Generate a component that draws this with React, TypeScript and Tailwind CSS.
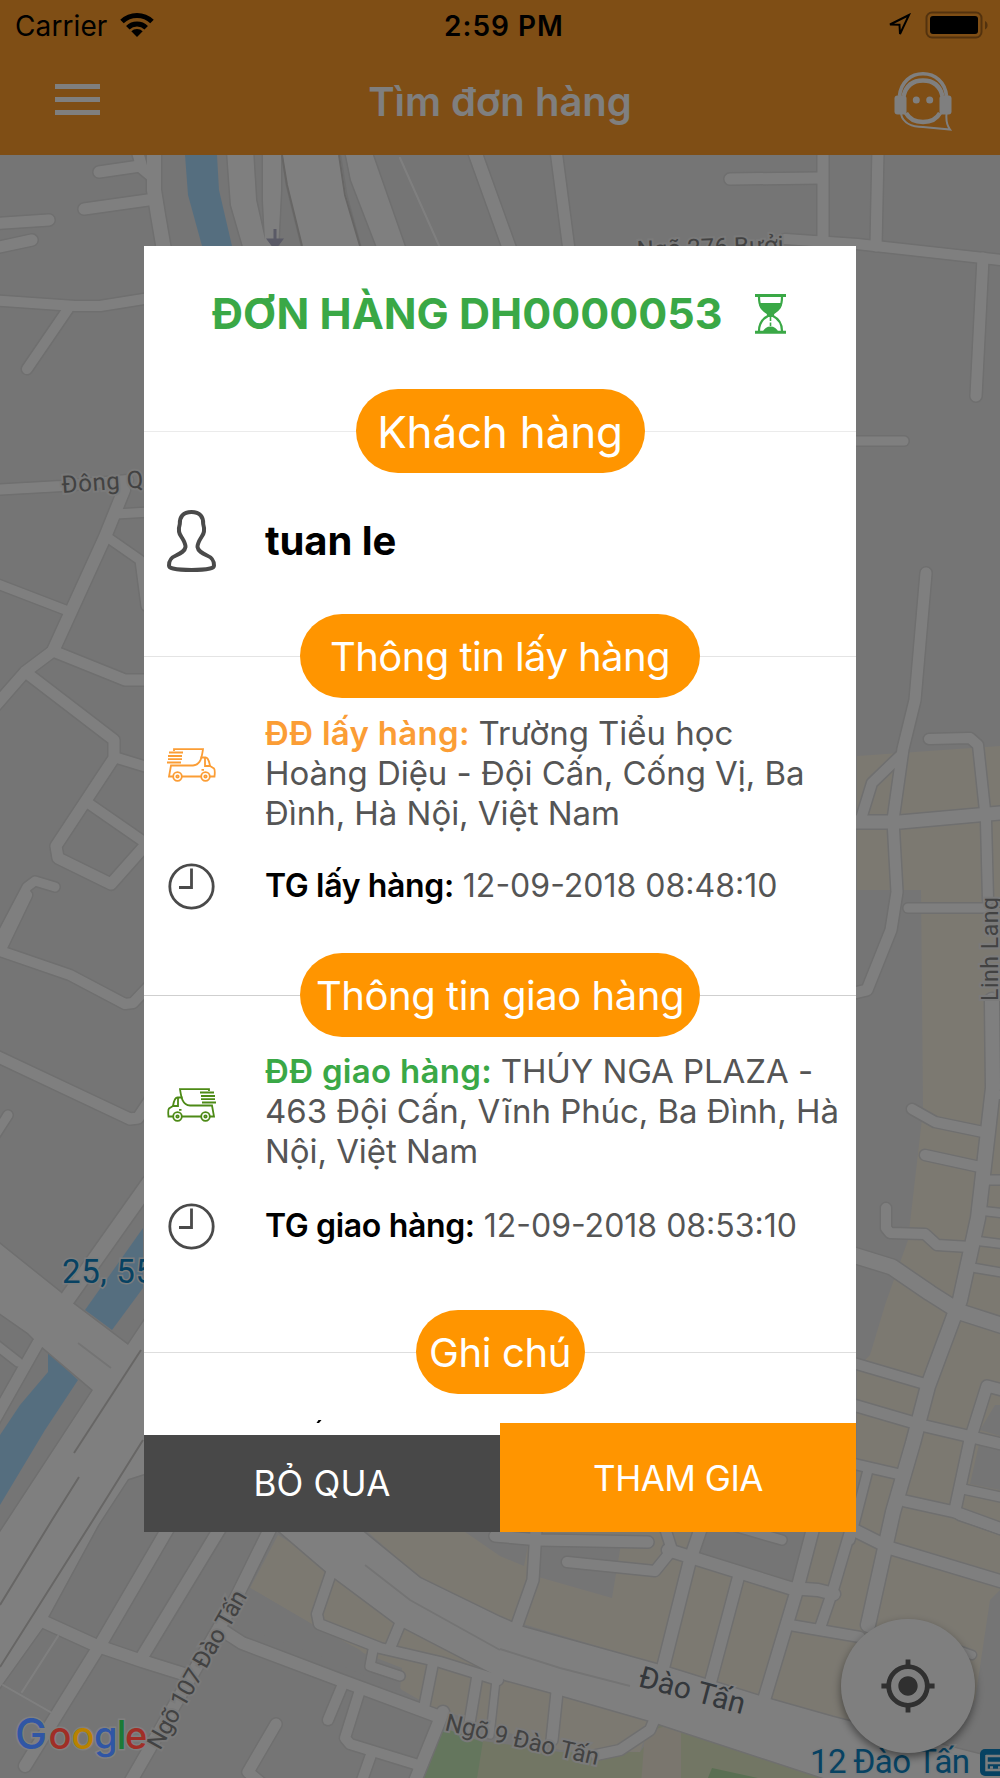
import type { ReactNode } from 'react'
import { MdMyLocation } from 'react-icons/md'

const ORDER = {
  code: 'DH0000053',
  customer: 'tuan le',
  pickup: {
    address: 'Trường Tiểu học Hoàng Diệu - Đội Cấn, Cống Vị, Ba Đình, Hà Nội, Việt Nam',
    time: '12-09-2018 08:48:10',
  },
  delivery: {
    address: 'THÚY NGA PLAZA - 463 Đội Cấn, Vĩnh Phúc, Ba Đình, Hà Nội, Việt Nam',
    time: '12-09-2018 08:53:10',
  },
}

// [path, stroke width]
const ROADS: [string, number][] = [
  // north west
  ['M137 150L142 168L154 178', 11],
  ['M154 150V190L158 215L164 250', 14],
  ['M99 172L140 166', 11],
  ['M84 209L155 199', 11],
  ['M-10 224L49 220', 11],
  ['M-10 249L32 240', 11],
  ['M474 150L510 250', 13],
  ['M556 150L569 250', 11],
  ['M-10 300L75 306H100L150 298', 10],
  ['M68 309L27 369', 10],
  ['M-10 490L62 486L128 480', 10],
  ['M124 490L105 537L53 651', 12],
  ['M116 514L150 512', 9],
  ['M107 537L140 560L146 606', 9],
  ['M-10 581L68 611', 9],
  ['M-10 712L25 672L53 651', 11],
  ['M53 651L125 680H150', 11],
  ['M28 674L114 740V758L56 846L58 858L111 884L150 840', 11],
  ['M114 757L150 768', 10],
  ['M88 803L150 846', 10],
  ['M55 887L35 881L27 887L-6 950', 9],
  ['M27 895L3 945L0 951L70 975L125 1004L133 1003L150 985', 10],
  ['M-10 1053L130 1119L138 1118L150 1100', 11],
  ['M-8 1140L8 1115', 9],
  // north east
  ['M823 150V240', 11],
  ['M730 179L820 178', 11],
  ['M878 150L876 246', 11],
  ['M785 239L857 244L1010 261', 10],
  ['M983 258L976 396', 11],
  ['M850 441H904', 9],
  ['M926 573L915 700L903 749L893 820L897 892L891 930L867 990L850 994', 11],
  ['M900 756L872 783L860 822', 10],
  ['M850 822H900L1010 812', 13],
  ['M929 739L970 738L978 745L986 820L988 900', 10],
  ['M908 908H985', 9],
  // east blocks
  ['M992 1000L993 1088L978 1218L960 1300L928 1386L913 1443L893 1512L868 1625', 14],
  ['M912 1109L935 1122L988 1133', 10],
  ['M925 1155L980 1167', 10],
  ['M886 1208V1228L890 1233L925 1234L937 1245L970 1247', 10],
  ['M850 1254L892 1267L930 1293L960 1312L1010 1328', 15],
  ['M850 1362L925 1384', 10],
  ['M850 1404L925 1426L1010 1446', 11],
  ['M850 1463L902 1475', 10],
  ['M868 1470L850 1540', 9],
  ['M905 1501L955 1512L1010 1532', 11],
  ['M1010 1392L987 1386L970 1440L955 1510', 11],
  ['M963 1489L1010 1499', 9],
  ['M985 1180H1010', 9],
  ['M983 1211L1010 1214', 8],
  ['M978 1241L1010 1245', 8],
  ['M975 1268L1010 1274', 8],
  ['M994 1095H1010', 8],
  // south west
  ['M150 1182L65 1302', 15],
  ['M-10 1428L38 1343', 11],
  ['M-10 1340L18 1362', 9],
  ['M40 1620L95 1645L142 1661L190 1676', 12],
  ['M170 1525L100 1645L25 1766', 12],
  ['M222 1525L142 1657', 12],
  ['M272 1525L235 1600L128 1786', 12],
  ['M225 1632L242 1643L340 1680L440 1717', 12],
  ['M276 1724L248 1772L262 1784', 11],
  ['M343 1684L328 1720', 10],
  ['M360 1690L345 1738L350 1744L415 1764', 10],
  ['M372 1752L360 1786', 10],
  ['M443 1712L413 1786', 12],
  // south centre
  ['M332 1570L317 1614L319 1624L380 1648L440 1662L498 1680', 10],
  ['M400 1624L390 1648', 10],
  ['M373 1650L370 1666L400 1676', 9],
  ['M433 1663L424 1708', 10],
  ['M477 1678L468 1732', 10],
  ['M496 1680L490 1735', 7],
  ['M557 1692L552 1740', 11],
  ['M656 1716L650 1730L620 1750L596 1755', 10],
  ['M536 1530L533 1580L516 1628', 11],
  ['M495 1536L540 1540L648 1542', 11],
  ['M567 1562L655 1571L672 1550L664 1525', 10],
  ['M668 1550L790 1588L818 1590L834 1594', 12],
  ['M702 1525L690 1560L662 1672', 12],
  ['M739 1575L710 1684', 11],
  ['M814 1525L797 1590L764 1700', 12],
  ['M852 1525L833 1590L820 1628', 10],
  ['M790 1625L860 1637', 10],
  ['M850 1528L890 1548L1010 1584', 12],
  ['M960 1515L1010 1532', 10],
  ['M730 1525L782 1540', 9],
  ['M958 1650L972 1655', 8],
]

const AREA_ROADS = [
  'M227 150H253L256 200L265 240L263 200V150H281V190L278 250H244L231 205Z',
  'M282 150L287 185L303 250H361L346 195L339 150Z',
  'M345 150H371L406 250H378L351 180Z',
  'M-5 1240L60 1292L71 1302L128 1345L150 1312V1472L128 1479L98 1525L48 1617L43 1627L3 1683L-5 1694V1540L93 1390L40 1345L28 1333L-5 1310Z',
  'M272 1525L328 1573L395 1623L505 1680L553 1693L647 1720L845 1785H1010V1762L833 1717L773 1700L667 1667L523 1627L500 1617L420 1578L355 1525Z',
]

const SAND = [
  'M857 756L1000 746V1590L990 1600L975 1700L940 1745L833 1717L667 1667L500 1617L420 1578L360 1525H857V1368L870 1355L885 1305L908 1240L923 1110L921 890H857Z',
  'M278 1535L500 1672L650 1722L640 1752L560 1750L430 1706L400 1690L402 1668L330 1640L310 1623L250 1588Z',
]

const RAIL_LINES = [
  'M282 155L287 185L302 246',
  'M339 155L345 195L360 246',
  'M141 1350L74 1453',
  'M79 1477L52 1520L0 1605',
  'M143 1440L93 1520L0 1667',
]

function MapCanvas() {
  return (
    <svg
      viewBox="0 155 1000 1623"
      className="block h-full w-full font-['Roboto',sans-serif]"
      fill="none"
    >
      <rect y="155" width="1000" height="1623" fill="#eaeaea" />
      {SAND.map(d => (
        <path key={d} d={d} fill="#f8f2e3" />
      ))}
      {/* grey courtyards inside the built-up blocks */}
      <path
        d="M455 1525H532L524 1566L500 1556ZM538 1538H622L612 1598L535 1576ZM702 1525H812L796 1582L700 1553ZM980 1440L1000 1444V1490L970 1484ZM995 1405H1000V1436L980 1430ZM310 1623L250 1588L235 1625L330 1660L430 1706L402 1690L360 1650Z"
        fill="#eaeaea"
      />
      <path d="M185 155H217L219 190L232 246H202L188 195Z" fill="#abdcff" />
      <path d="M143 1228V1288L112 1330L85 1310Z" fill="#abdcff" />
      <path d="M48 1352L78 1380L45 1430L0 1505V1435L20 1405L48 1372Z" fill="#abdcff" />
      <path d="M418 1785L444 1728L485 1743L476 1785Z" fill="#c9ecbb" />
      <path d="M476 1785L483 1741L560 1752L640 1752L660 1724L760 1755L845 1785Z" fill="#e4ecc9" />
      <path d="M645 1732L681 1722V1785H641Z" fill="#f4eddc" />
      <path d="M712 1768L790 1785H705Z" fill="#b5dfa6" />

      <g stroke="#dedede" strokeLinejoin="round" strokeLinecap="round">
        {AREA_ROADS.map(d => (
          <path key={d} d={d} strokeWidth={3} />
        ))}
        {ROADS.map(([d, w]) => (
          <path key={d} d={d} strokeWidth={w + 3} />
        ))}
      </g>
      <g stroke="#ffffff" strokeLinejoin="round" strokeLinecap="round">
        {AREA_ROADS.map(d => (
          <path key={d} d={d} fill="#ffffff" strokeWidth={0} />
        ))}
        {ROADS.map(([d, w]) => (
          <path key={d} d={d} strokeWidth={w} />
        ))}
        <path d="M400 158L441 250M58 1636L22 1692M3 1685L52 1713" strokeWidth={2} />
      </g>
      {RAIL_LINES.map(d => (
        <path key={d} d={d} stroke="#cfcdcb" strokeWidth={2} />
      ))}
      <path
        d="M78 1343L111 1368M365 1565L410 1600L500 1650M500 1649L560 1668L630 1686"
        stroke="#e9e9e9"
        strokeWidth={2}
      />
      <path d="M275 229V242M269 240H281L275 248Z" stroke="#b4b4cc" strokeWidth={3} fill="#b4b4cc" />

      <g fill="#848484" stroke="#f4f4f4" strokeWidth={4} paintOrder="stroke" fontSize={24}>
        <text transform="translate(637 258) rotate(-2)" textLength={147}>Ngõ 276 Bưởi</text>
        <text transform="translate(62 493) rotate(-4)" textLength={82}>Đông Q</text>
        <text transform="translate(998 1001) rotate(-90)" textLength={104} fontSize={23}>Linh Lang</text>
        <text transform="translate(160 1751) rotate(-60.5)" textLength={178}>Ngõ 107 Đào Tấn</text>
        <text transform="translate(444 1730) rotate(13)" textLength={157}>Ngõ 9 Đào Tấn</text>
      </g>
      <g fill="#697078" stroke="#ffffff" strokeWidth={3} paintOrder="stroke" fontSize={30}>
        <text transform="translate(637 1686) rotate(15)" textLength={109}>Đào Tấn</text>
      </g>
      <g fill="#0e84c4" stroke="#f6fafc" strokeWidth={3} paintOrder="stroke">
        <text x="62" y="1283" fontSize={33} textLength={92}>25, 55</text>
        <text x="810" y="1773" fontSize={33} textLength={160}>12 Đào Tấn</text>
      </g>
      {/* bus stop */}
      <rect x="980" y="1749" width="27" height="27" rx="5" fill="#0e84c4" />
      <path d="M986 1756H1000M986.500 1755V1770H1000M986 1763H1000" stroke="#f6fafc" strokeWidth={2.5} />
      <path d="M990 1767.500H993M998 1767.500H1000" stroke="#f6fafc" strokeWidth={2.5} />
    </svg>
  )
}

function StatusBar() {
  return (
    <div className="grid h-[49px] grid-cols-3 items-center pl-[15px] pr-[11px] pt-[2px] text-[28px] leading-none text-black">
      <div className="flex items-center gap-[12px]">
        <span className="tracking-[0.1px]">Carrier</span>
        <svg width="36" height="26" viewBox="0 0 36 26" fill="none" stroke="#000" strokeWidth="5" className="-mt-[2px]">
          <path d="M3 9.5A21.5 21.5 0 0 1 33 9.5" />
          <path d="M8.8 15.8A13.2 13.2 0 0 1 27.2 15.8" />
          <path d="M18 25L12.3 19.3A8 8 0 0 1 23.7 19.3Z" fill="#000" stroke="none" />
        </svg>
      </div>
      <div className="pl-[4px] text-center font-semibold tracking-[1px]">2:59 PM</div>
      <div className="flex items-center justify-end gap-[14px] pb-px">
        <svg width="24" height="24" viewBox="0 0 24 24" fill="none" stroke="#000" strokeWidth="2">
          <path d="M22 2L3 11.500L12.500 11.800L13 21Z" strokeLinejoin="miter" />
        </svg>
        <svg width="64" height="28" viewBox="0 0 64 28" fill="none">
          <rect x="1.5" y="1.5" width="55" height="25" rx="5.5" stroke="#a6651d" strokeWidth="2" />
          <rect x="5" y="5" width="48" height="18" rx="3" fill="#000" />
          <path d="M60 10C63.5 11.5 63.5 17 60 18.5Z" fill="#a6651d" />
        </svg>
      </div>
    </div>
  )
}

function SupportIcon() {
  return (
    <svg width="58" height="60" viewBox="0 0 58 60" fill="none" stroke="#fff">
      <path d="M5.500 24C7 10 17 1.800 29 1.800S51 10 52.500 24" strokeWidth="3.600" />
      <path d="M9.500 24C12 14 19 8.500 29 8.500S46 14 48.500 24" strokeWidth="4.500" />
      <path d="M12 41C15 46.500 21 50 29 50S43 46.500 46 41" strokeWidth="4.600" />
      <rect x="0.500" y="23.500" width="12" height="19" rx="3" fill="#fff" stroke="none" />
      <rect x="45.500" y="23.500" width="12" height="19" rx="3" fill="#fff" stroke="none" />
      <circle cx="22.300" cy="28" r="3.500" fill="#fff" stroke="none" />
      <circle cx="35.700" cy="28" r="3.500" fill="#fff" stroke="none" />
      <path d="M7 42C9 51 18 55 29 55L56 57.500C52.500 53 52 48 52.500 42" strokeWidth="2" />
    </svg>
  )
}

function Header() {
  return (
    <header className="h-[155px] shrink-0 bg-[#fe9c2a]">
      <StatusBar />
      <div className="grid h-[106px] grid-cols-[1fr_auto_1fr] items-start px-[48px] text-white">
        <div className="ml-[7px] mt-[35px] flex w-[45px] flex-col gap-[8px]">
          <span className="h-[5px] bg-white" />
          <span className="h-[5px] bg-white" />
          <span className="h-[5px] bg-white" />
        </div>
        <h1 className="mt-[28px] text-[40px] font-semibold leading-[50px]">Tìm đơn hàng</h1>
        <div className="mt-[23px] justify-self-end">
          <SupportIcon />
        </div>
      </div>
    </header>
  )
}

function HourglassIcon() {
  return (
    <svg width="31" height="40" viewBox="0 0 31 40" fill="none" stroke="#3aa846" className="mt-[2px]">
      <path d="M0 1.500H31M0 38.300H31" strokeWidth="3" />
      <path d="M4 3C4 14 8 16 13 19.500V22C8 24.500 4 28 4 37M27 3C27 14 23 16 18 19.500V22C23 24.500 27 28 27 37" strokeWidth="2.200" />
      <path d="M4 9H27C26 15 22 17 18 20V23H13V20C9 17 5 15 4 9Z" fill="#3aa846" stroke="none" />
      <path d="M15.500 23V32" strokeWidth="1.600" strokeDasharray="4 1.500" />
      <path d="M7.500 38C9 34.500 12 32.500 15.500 32.500S22 34.500 23.500 38Z" fill="#3aa846" stroke="none" />
    </svg>
  )
}

function PersonIcon() {
  return (
    <svg width="49" height="62" viewBox="0 0 49 62" fill="none" stroke="#4a4a4a" strokeWidth="4" strokeLinejoin="round">
      <path d="M24.500 2C16 2 12.500 7 12.800 14C11 20 12 24 14.500 27C17 31 18.500 33 18.500 37C18 41 14 43 9 45.500C3 48 2 51 2 55.500C2 57.500 3.500 58 6 58.500C12 59.800 18 60 24.500 60S37 59.800 43 58.500C45.500 58 47 57.500 47 55.500C47 51 46 48 40 45.500C35 43 31 41 30.500 37C30.500 33 32 31 34.500 27C37 24 38 20 36.200 14C36.500 7 33 2 24.500 2Z" />
    </svg>
  )
}

function ClockIcon() {
  return (
    <svg width="47" height="47" viewBox="0 0 47 47" fill="none" stroke="#4a4a4a">
      <circle cx="23.500" cy="23.500" r="21.700" strokeWidth="2.800" />
      <path d="M23.500 5.500V24.500H11" strokeWidth="2.800" />
    </svg>
  )
}

function TruckIcon({ className }: { className?: string }) {
  return (
    <svg width="49" height="34" viewBox="0 0 49 34" fill="none" stroke="currentColor" strokeWidth="1.800" className={className}>
      <path d="M7 3V1.200H36C35 8 34 17 26 17.500H4L2 28.500H6" />
      <path d="M2 4.500H16M1 8H15M1 11.200H15M0 14.500H14" />
      <path d="M33.500 9.500H38.500C41 9.500 42 12 43 18L47 20.500C48 21.500 48 24 47.500 28.500H43M34 28.500H15" />
      <path d="M38 9.500V18H43.500M34.500 21.800H37" />
      <circle cx="10.500" cy="28.500" r="4.300" />
      <circle cx="10.500" cy="28.500" r="1.200" />
      <circle cx="38.500" cy="28.500" r="4.300" />
      <circle cx="38.500" cy="28.500" r="1.200" />
    </svg>
  )
}

function SectionTitle({ className, line, children }: { className: string; line: string; children: ReactNode }) {
  return (
    <div className="flex items-center">
      <div className={`h-px flex-1 ${line}`} />
      <div className={`flex h-[84px] items-center justify-center whitespace-nowrap rounded-[42px] bg-[#ff9500] pt-[2px] text-white ${className}`}>
        {children}
      </div>
      <div className={`h-px flex-1 ${line}`} />
    </div>
  )
}

function InfoRow({ icon, className, children }: { icon: ReactNode; className?: string; children: ReactNode }) {
  return (
    <div className={`flex items-center gap-[49px] pl-[23px] pr-[13px] ${className ?? ''}`}>
      <div className="flex w-[49px] shrink-0 justify-center">{icon}</div>
      <div className="flex-1">{children}</div>
    </div>
  )
}

function OrderDialog() {
  return (
    <div className="mt-[246px] flex h-[1286px] w-[712px] flex-col bg-white">
      <div className="flex min-h-0 flex-1 flex-col">
        <div className="flex h-[134px] shrink-0 items-center gap-[33px] pl-[68px]">
          <h2 className="whitespace-nowrap text-[43px] font-bold text-[#3aa846]">ĐƠN HÀNG {ORDER.code}</h2>
          <HourglassIcon />
        </div>

        <div className="mt-[9px]">
          <SectionTitle line="bg-[#ebebeb]" className="w-[289px] text-[44px] tracking-[-0.2px]">Khách hàng</SectionTitle>
        </div>
        <InfoRow icon={<PersonIcon />} className="mb-[6px] h-[135px]">
          <span className="text-[40px] font-bold tracking-[-0.1px] text-black">{ORDER.customer}</span>
        </InfoRow>

        <SectionTitle line="bg-[#e4e4e4]" className="w-[400px] text-[40px] tracking-[-0.55px]">Thông tin lấy hàng</SectionTitle>
        <InfoRow icon={<TruckIcon className="-mt-[16px] text-[#fb9d35]" />} className="mt-[15px] h-[120px]">
          <p className="text-[33px] leading-[40px] tracking-[-0.04px] text-[#555]">
            <span className="font-semibold tracking-[0.3px] text-[#fb9d35]">ĐĐ lấy hàng: </span>
            {ORDER.pickup.address}
          </p>
        </InfoRow>
        <InfoRow icon={<ClockIcon />} className="h-[105px] pt-px">
          <p className="text-[32px] text-[#555]">
            <span className="font-semibold tracking-[-0.35px] text-black">TG lấy hàng:</span> {ORDER.pickup.time}
          </p>
        </InfoRow>

        <div className="mt-[15px]">
          <SectionTitle line="bg-[#cfcfcf]" className="w-[400px] text-[40px] tracking-[-0.45px]">Thông tin giao hàng</SectionTitle>
        </div>
        <InfoRow icon={<TruckIcon className="-mt-[13px] -scale-x-100 text-[#4d8a16]" />} className="mt-[14px] h-[120px]">
          <p className="text-[33px] leading-[40px] tracking-[-0.06px] text-[#555]">
            <span className="font-semibold tracking-[0.3px] text-[#3aa846]">ĐĐ giao hàng: </span>
            {ORDER.delivery.address}
          </p>
        </InfoRow>
        <InfoRow icon={<ClockIcon />} className="mb-[30px] h-[109px] pt-px">
          <p className="text-[32px] text-[#555]">
            <span className="font-semibold tracking-[-0.35px] text-black">TG giao hàng:</span> {ORDER.delivery.time}
          </p>
        </InfoRow>

        <SectionTitle line="bg-[#dedede]" className="w-[169px] text-[40px] tracking-[-0.4px]">Ghi chú</SectionTitle>
        <svg width="6" height="3" viewBox="0 0 6 3" className="ml-[172px] mt-[26px]">
          <path d="M0.500 3L2.500 0H5.500L3 3Z" fill="#000" />
        </svg>
      </div>

      <div className="flex shrink-0 items-end text-[35px] text-white">
        <button className="h-[97px] flex-1 bg-[#484848] tracking-[0.2px]">BỎ QUA</button>
        <button className="h-[109px] flex-1 bg-[#ff9500] pt-px tracking-[-0.5px]">THAM GIA</button>
      </div>
    </div>
  )
}

function GoogleMark() {
  return (
    <svg width="142" height="56" viewBox="10 1708 142 56" fontSize="38" fontWeight="500">
      <g stroke="#808080" strokeWidth={3} paintOrder="stroke">
        <text x="15" y="1749" fill="#3056a5" fontSize="43">G</text>
        <text x="48.500" y="1749" fill="#a02e26">o</text>
        <text x="71.500" y="1749" fill="#b98200">o</text>
        <text x="94" y="1749" fill="#3056a5">g</text>
        <text x="116.500" y="1749" fill="#1c7a35" fontSize="40">l</text>
        <text x="125" y="1749" fill="#a02e26">e</text>
      </g>
    </svg>
  )
}

export default function App() {
  return (
    <div className="relative flex h-[1778px] w-[1000px] flex-col overflow-hidden font-['Inter','Liberation_Sans',sans-serif]">
      <Header />
      <main className="relative min-h-0 flex-1">
        <MapCanvas />
        <button className="absolute bottom-[25px] right-[25px] flex size-[134px] items-center justify-center rounded-full bg-white text-[#606060] shadow-[0_4px_8px_rgba(0,0,0,0.45)]">
          <MdMyLocation size={58} />
        </button>
      </main>

      <div className="absolute inset-0 flex items-start justify-center bg-black/50">
        <OrderDialog />
      </div>
      <div className="absolute bottom-[14px] left-[10px]">
        <GoogleMark />
      </div>
    </div>
  )
}
